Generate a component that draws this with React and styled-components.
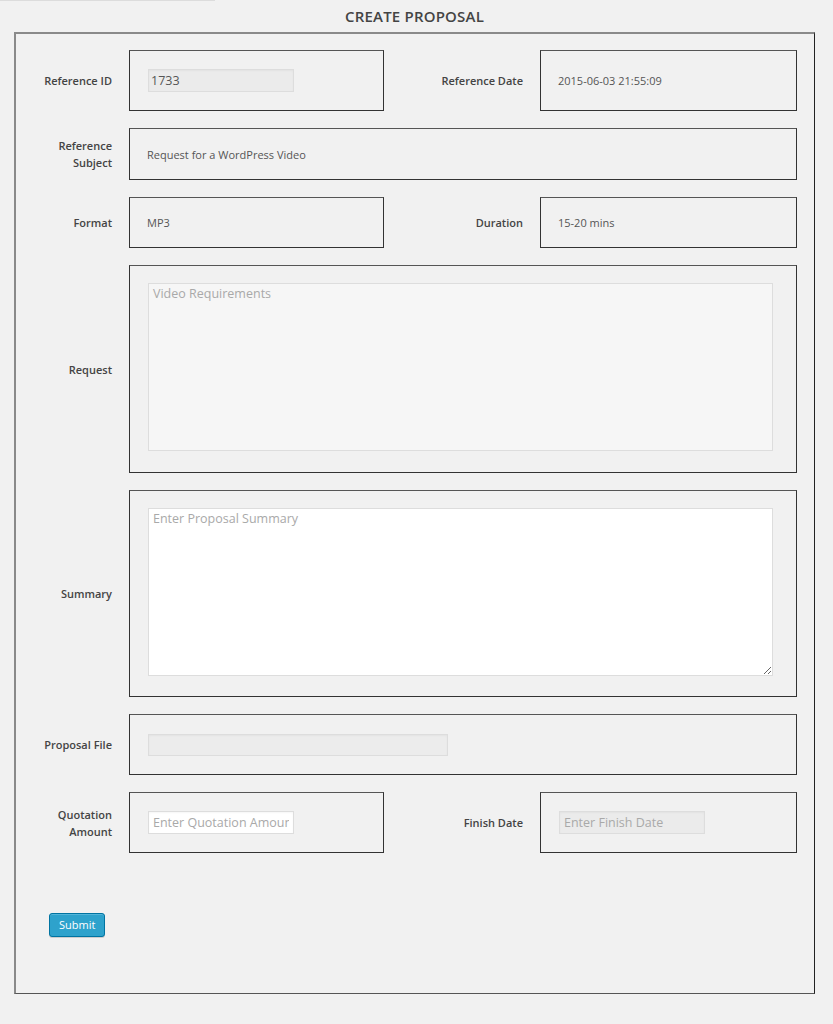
import React from "react";
import styled, { createGlobalStyle } from "styled-components";

const GlobalStyle = createGlobalStyle`
  html, body { margin: 0; padding: 0; background: #f1f1f1; }
  body { font-family: "Open Sans", "DejaVu Sans", sans-serif; color: #444; }
  * { box-sizing: border-box; }
`;

const Page = styled.div`
  padding: 0 18px 31px 14px;
`;

const TopRule = styled.div`
  width: 215px;
  margin-left: -14px;
  border-top: 1px solid #dcdcdc;
`;

const Title = styled.h2`
  margin: 0;
  height: 31px;
  line-height: 30px;
  text-align: center;
  font-size: 15px;
  letter-spacing: 0.2px;
  font-weight: 600;
  color: #444;
`;

const Form = styled.form`
  border-top: 2px solid #8a8a8a;
  border-left: 2px solid #8a8a8a;
  border-right: 1px solid #222;
  border-bottom: 1px solid #555;
  padding: 16px 0 56px 0;
`;

const Grid = styled.div`
  display: grid;
  grid-template-columns: 96px 255px 122px 257px;
  grid-template-rows: 61px 52px 51px 208px 207px 61px 61px;
  column-gap: 17px;
  row-gap: 17px;
  padding-right: 17px;
`;

const Label = styled.label`
  justify-self: end;
  align-self: center;
  text-align: right;
  max-width: ${(p) => p.$max || 80}px;
  font-size: 11px;
  font-weight: 600;
  line-height: 17px;
  color: #444;
`;

const Box = styled.div`
  grid-column: ${(p) => (p.$wide ? "span 3" : "auto")};
  border: 1px solid #333;
  border-top-color: #555;
  display: flex;
  align-items: ${(p) => (p.$top ? "flex-start" : "center")};
  padding: ${(p) => (p.$top ? "17px 18px 0" : "0 18px")};
`;

const Value = styled.span`
  font-size: 11px;
  color: #555;
  margin-left: -1px;
`;

const TextInput = styled.input`
  width: ${(p) => p.$width}px;
  height: ${(p) => p.$height || 23}px;
  border: 1px solid #dddddd;
  background: ${(p) => p.$bg || "#fff"};
  box-shadow: inset 0 1px 2px rgba(0, 0, 0, 0.04);
  font-family: inherit;
  font-size: 12.5px;
  color: #555;
  padding: 0 ${(p) => (p.$pad != null ? p.$pad : 4)}px;
  outline: none;
  &::placeholder { color: #a9a9a9; }
`;

const TextArea = styled.textarea`
  width: 625px;
  height: 168px;
  border: 1px solid #dddddd;
  background: ${(p) => p.$bg || "#fff"};
  resize: ${(p) => (p.$fixed ? "none" : "both")};
  font-family: inherit;
  font-size: 12.5px;
  line-height: 18px;
  padding: 1px 4px;
  color: #555;
  outline: none;
  &::placeholder { color: #a9a9a9; }
`;

const Actions = styled.div`
  margin-top: 59px;
  padding-left: 33px;
`;

const SubmitButton = styled.button`
  height: 24px;
  padding: 0 9px;
  background: #2ea2cc;
  border: 1px solid #0074a2;
  border-radius: 3px;
  box-shadow: inset 0 1px 0 rgba(120, 200, 230, 0.5), 0 1px 0 rgba(0, 0, 0, 0.15);
  color: #fff;
  font-family: inherit;
  font-size: 11px;
  line-height: 22px;
  cursor: pointer;
`;

export default function App() {
  return (
    <>
      <GlobalStyle />
      <Page>
        <TopRule />
        <Title>CREATE PROPOSAL</Title>
        <Form onSubmit={(e) => e.preventDefault()}>
          <Grid>
            <Label>Reference ID</Label>
            <Box>
              <TextInput $width={146} $pad={2} $bg="#ebebeb" value="1733" readOnly />
            </Box>
            <Label $max={110}>Reference Date</Label>
            <Box>
              <Value>2015-06-03 21:55:09</Value>
            </Box>

            <Label>Reference Subject</Label>
            <Box $wide>
              <Value>Request for a WordPress Video</Value>
            </Box>

            <Label>Format</Label>
            <Box>
              <Value>MP3</Value>
            </Box>
            <Label $max={110}>Duration</Label>
            <Box>
              <Value>15-20 mins</Value>
            </Box>

            <Label>Request</Label>
            <Box $wide $top>
              <TextArea $fixed $bg="#f6f6f6" placeholder="Video Requirements" readOnly />
            </Box>

            <Label>Summary</Label>
            <Box $wide $top>
              <TextArea placeholder="Enter Proposal Summary" />
            </Box>

            <Label>Proposal File</Label>
            <Box $wide>
              <TextInput $width={300} $height={22} $bg="#ececec" readOnly />
            </Box>

            <Label>Quotation Amount</Label>
            <Box>
              <TextInput $width={146} placeholder="Enter Quotation Amount" />
            </Box>
            <Label $max={110}>Finish Date</Label>
            <Box>
              <TextInput $width={146} $bg="#ebebeb" placeholder="Enter Finish Date" readOnly />
            </Box>
          </Grid>
          <Actions>
            <SubmitButton type="submit">Submit</SubmitButton>
          </Actions>
        </Form>
      </Page>
    </>
  );
}
